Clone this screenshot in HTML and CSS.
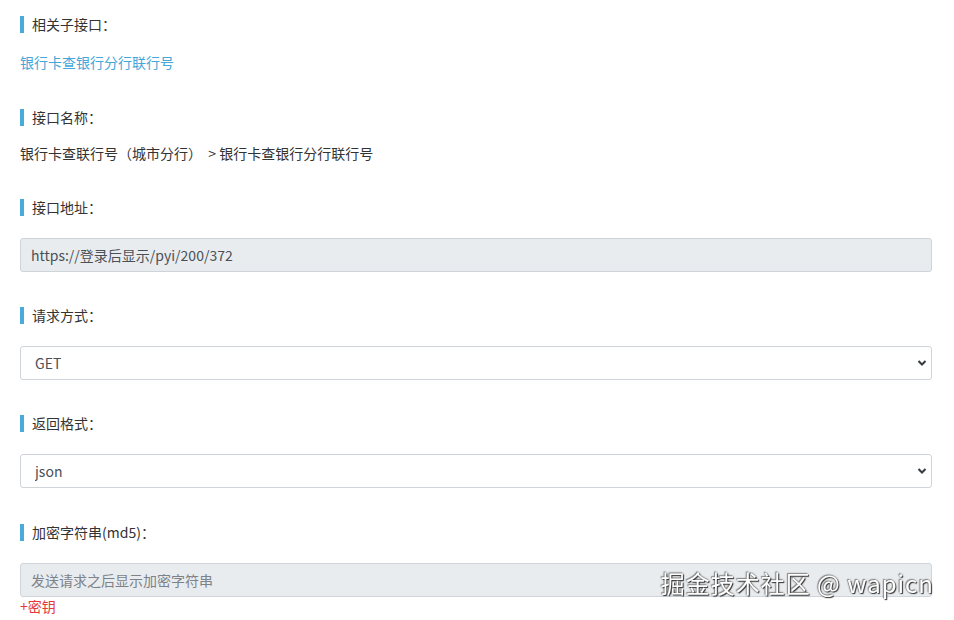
FILE: index.html
```html
<!DOCTYPE html>
<html>

<head>
    <meta charset="utf-8">
    <title>接口详情</title>
    <link rel="stylesheet" href="styles.css">
</head>

<body>
    <div class="api-panel">
        <div class="api-item">
            <div class="item-title">相关子接口：</div>
            <a class="sub-link" href="#">银行卡查银行分行联行号</a>
        </div>
        <div class="api-item">
            <div class="item-title">接口名称：</div>
            <div class="item-text">银行卡查联行号（城市分行）&nbsp; &gt; 银行卡查银行分行联行号</div>
        </div>
        <div class="api-item field-item">
            <div class="item-title">接口地址：</div>
            <input class="form-control" type="text" value="https://登录后显示/pyi/200/372" readonly>
        </div>
        <div class="api-item field-item">
            <div class="item-title">请求方式：</div>
            <div class="select-wrap">
                <select class="form-control">
                    <option>GET</option>
                    <option>POST</option>
                </select>
                <svg class="select-arrow" width="10" height="8" viewBox="0 0 10 8">
                    <path d="M1.5 2 L5 5.5 L8.5 2" fill="none" stroke="#343a40" stroke-width="2"></path>
                </svg>
            </div>
        </div>
        <div class="api-item field-item format-item">
            <div class="item-title">返回格式：</div>
            <div class="select-wrap">
                <select class="form-control">
                    <option>json</option>
                    <option>xml</option>
                </select>
                <svg class="select-arrow" width="10" height="8" viewBox="0 0 10 8">
                    <path d="M1.5 2 L5 5.5 L8.5 2" fill="none" stroke="#343a40" stroke-width="2"></path>
                </svg>
            </div>
        </div>
        <div class="api-item field-item">
            <div class="item-title">加密字符串(md5)：</div>
            <input class="form-control" type="text" placeholder="发送请求之后显示加密字符串" readonly>
            <a class="add-key" href="#">+密钥</a>
        </div>
    </div>

    <div class="watermark">掘金技术社区 @ wapicn</div>
</body>

</html>
```

FILE: styles.css
```css
body {
    margin: 0;
    padding: 14px 22px 0 20px;
    background: #fff;
    color: #333;
    font-family: "Noto Sans CJK SC", "Liberation Sans", sans-serif;
    font-size: 14px;
}

.api-item {
    margin-bottom: 34px;
}

.field-item {
    margin-bottom: 33px;
}

.format-item {
    margin-bottom: 34px;
}

.item-title {
    display: flex;
    align-items: center;
    height: 20px;
    line-height: 20px;
    margin-bottom: 20px;
}

.field-item .item-title {
    margin-bottom: 21px;
}

.item-title::before {
    content: "";
    display: block;
    width: 4px;
    height: 17px;
    margin-right: 8px;
    background: #4aabdb;
}

.sub-link {
    display: block;
    line-height: 20px;
    margin-top: -2px;
    padding-bottom: 1px;
    color: #45a6d9;
    text-decoration: none;
}

.item-text {
    line-height: 20px;
    margin-top: -4px;
}

.form-control {
    display: block;
    width: 100%;
    height: 34px;
    box-sizing: border-box;
    padding: 0 10px;
    border: 1px solid #ced4da;
    border-radius: 3px;
    background: #fff;
    color: #495057;
    font-family: "Noto Sans CJK SC", "Liberation Sans", sans-serif;
    font-size: 14px;
    outline: none;
}

input.form-control[readonly] {
    background: #e9ecef;
}

input.form-control::placeholder {
    color: #7d8288;
}

.select-wrap {
    position: relative;
}

.select-wrap select {
    padding-left: 14px;
    appearance: none;
    -webkit-appearance: none;
    cursor: pointer;
}

.select-arrow {
    position: absolute;
    right: 5px;
    top: 13px;
    pointer-events: none;
}

.add-key {
    display: block;
    line-height: 18px;
    color: #e4393c;
    text-decoration: none;
}

.watermark {
    position: fixed;
    right: 20px;
    bottom: 20px;
    color: #fff;
    font-size: 24px;
    letter-spacing: 1px;
    text-shadow: 1px 1px 1px #333, -1px -1px 1px #888, 0 0 2px #555;
}
```
